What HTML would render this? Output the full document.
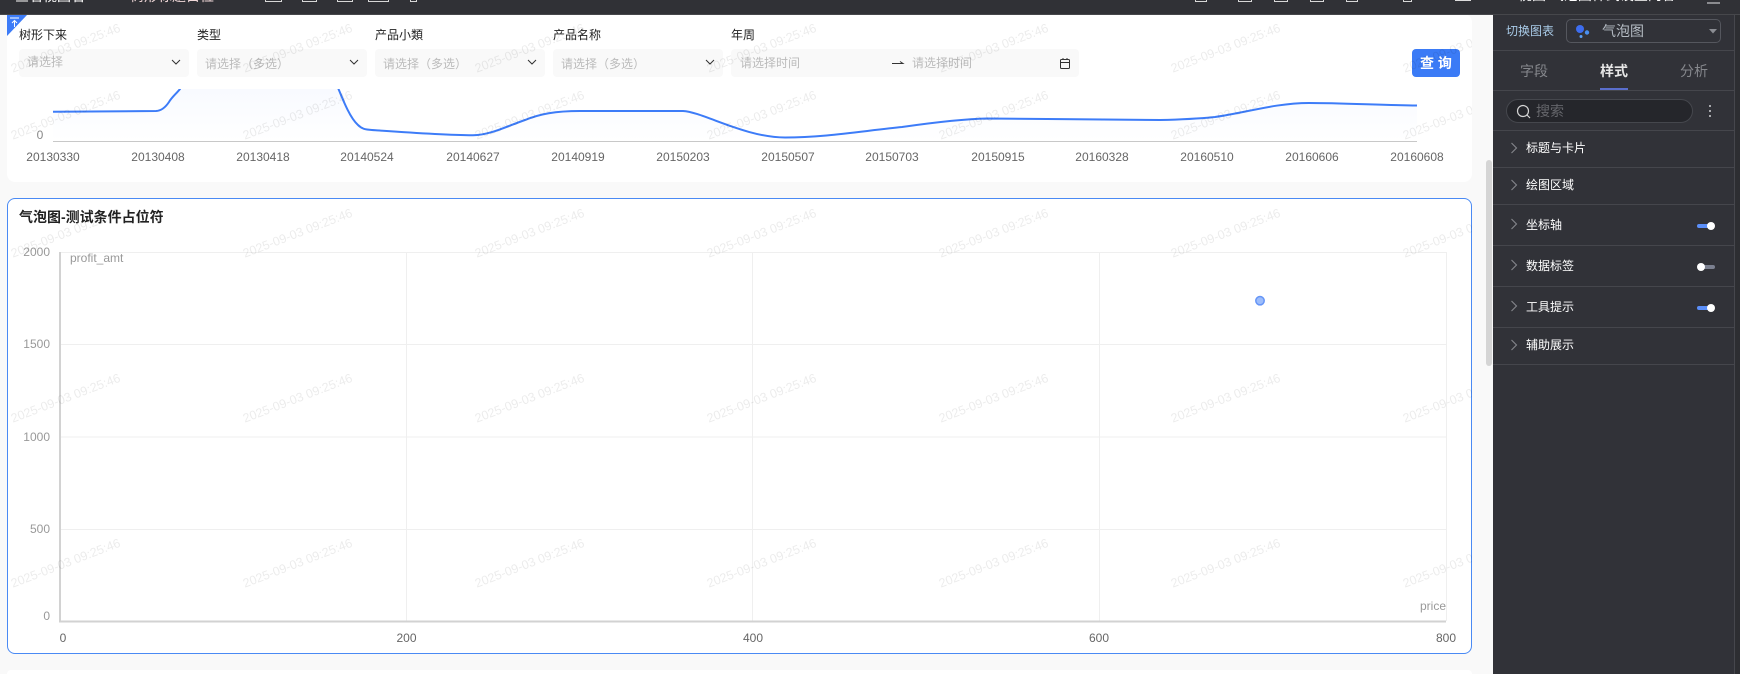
<!DOCTYPE html>
<html lang="zh"><head><meta charset="utf-8"><title>气泡图</title>
<style>
*{box-sizing:border-box}
html,body{margin:0;padding:0;width:1740px;height:674px;overflow:hidden;background:#f9f9f9;font-family:"Liberation Sans","Noto Sans CJK SC",sans-serif;font-size:12px}
.a{position:absolute;white-space:nowrap}
.top{left:0;top:0;width:1740px;height:15px;background:#303136;border-bottom:1px solid #46474b;overflow:hidden}
.u{position:absolute;top:-6px;height:8px;border:1px solid #d8d8d8}
.card{background:#fff;border-radius:8px}
.lab{top:27px;line-height:16px;color:#222}
.sel{top:49px;height:28px;background:#f9f9f9;border-radius:4px}
.ph{top:56px;line-height:16px;color:#bbb}
.side{left:1493px;top:15px;width:242px;height:659px;background:#313238;border-right:1px solid #46474d}
.hl{left:1493px;width:241px;height:1px;background:#45464c}
.it{left:1526px;line-height:16px;color:#fff}
.ta{top:62px;line-height:18px;font-size:14px;color:#85878c;transform:translateX(-50%)}
svg{position:absolute;left:0;top:0}
</style></head><body>
<div class="a" style="left:1472px;top:14px;width:21px;height:660px;background:#f9f9f9"></div>
<div class="a card" style="left:7px;top:14px;width:1465px;height:168px"></div>
<div class="a card" style="left:7px;top:198px;width:1465px;height:456px;border:1px solid #4a8af4"></div>
<div class="a" style="left:7px;top:670px;width:1465px;height:4px;background:#fff;border-radius:8px 8px 0 0"></div>
<div class="a" style="left:1486px;top:160px;width:6px;height:206px;background:#d5d5d5;border-radius:3px"></div>

<div class="a lab" style="left:19px">树形下来</div>
<div class="a lab" style="left:197px">类型</div>
<div class="a lab" style="left:375px">产品小類</div>
<div class="a lab" style="left:553px">产品名称</div>
<div class="a lab" style="left:731px">年周</div>
<div class="a sel" style="left:19px;width:170px"></div>
<div class="a sel" style="left:197px;width:170px"></div>
<div class="a sel" style="left:375px;width:170px"></div>
<div class="a sel" style="left:553px;width:170px"></div>
<div class="a sel" style="left:731px;width:348px"></div>
<div class="a ph" style="left:27px;top:54px">请选择</div>
<div class="a ph" style="left:205px">请选择（多选）</div>
<div class="a ph" style="left:383px">请选择（多选）</div>
<div class="a ph" style="left:561px">请选择（多选）</div>
<div class="a ph" style="left:740px;top:55px">请选择时间</div>
<div class="a ph" style="left:912px;top:55px">请选择时间</div>
<div class="a" style="left:1412px;top:49px;width:48px;height:28px;background:#3b7bf6;border-radius:4px;color:#fff;font-size:14px;font-weight:bold;line-height:28px;text-align:center">查 询</div>

<svg width="1740" height="674" viewBox="0 0 1740 674">
<defs><clipPath id="c1"><rect x="0" y="89" width="1472" height="60"/></clipPath><clipPath id="wm"><rect x="7" y="14" width="1465" height="640"/></clipPath>
<linearGradient id="gr" x1="0" y1="89" x2="0" y2="141" gradientUnits="userSpaceOnUse"><stop offset="0" stop-color="#3370ff" stop-opacity=".035"/><stop offset="1" stop-color="#3370ff" stop-opacity="0"/></linearGradient></defs>
<g fill="none" stroke="#333" stroke-width="1">
<path d="M172 60l4 4 4-4M350 60l4 4 4-4M528 60l4 4 4-4M706 60l4 4 4-4"/>
<path d="M892 63.500h11l-3-2"/>
<rect x="1060.500" y="59.500" width="9" height="9" rx="1"/><path d="M1060 62.500h10M1063 58v2M1067 58v2"/>
</g>
<g clip-path="url(#c1)">
<path fill="url(#gr)" d="M53 111.700L156 111C161 110.800 165 108 169 102C172 97 176 94 180 89C200 40 320 40 338.500 89C343 100 350 118 358 125C362 129 365 129.500 372 130C400 132 440 135 473 135.300C490 135 505 127 525 120C540 114 555 111 580 111L683 111C703 112 745 137.500 785 137.500C825 137.500 862 131 902 127C930 123 960 119 987 118.500C1040 118.500 1115 120 1160 120C1185 119.500 1200 118.500 1215 117C1245 113 1275 103 1309 103C1340 103 1380 105 1417 105.500V141H53Z"/>
<path fill="none" stroke="#3d7cf8" stroke-width="2" d="M53 111.700L156 111C161 110.800 165 108 169 102C172 97 176 94 180 89C200 40 320 40 338.500 89C343 100 350 118 358 125C362 129 365 129.500 372 130C400 132 440 135 473 135.300C490 135 505 127 525 120C540 114 555 111 580 111L683 111C703 112 745 137.500 785 137.500C825 137.500 862 131 902 127C930 123 960 119 987 118.500C1040 118.500 1115 120 1160 120C1185 119.500 1200 118.500 1215 117C1245 113 1275 103 1309 103C1340 103 1380 105 1417 105.500"/>
</g>
<path d="M53 141.500H1417" stroke="#c8c8c8" stroke-width="1"/>
<g font-family="'Liberation Sans',sans-serif" font-size="12" fill="#666" text-anchor="middle">
<text x="40" y="139" fill="#888">0</text>
<text x="53" y="161">20130330</text><text x="158" y="161">20130408</text><text x="263" y="161">20130418</text><text x="367" y="161">20140524</text><text x="473" y="161">20140627</text><text x="578" y="161">20140919</text><text x="683" y="161">20150203</text><text x="788" y="161">20150507</text><text x="892" y="161">20150703</text><text x="998" y="161">20150915</text><text x="1102" y="161">20160328</text><text x="1207" y="161">20160510</text><text x="1312" y="161">20160606</text><text x="1417" y="161">20160608</text>
</g>

<g stroke="#efefef" stroke-width="1" fill="none">
<path d="M60 252.500H1446M60 344.500H1446M60 437H1446M60 529.500H1446M406.500 252V621M752.500 252V621M1099.500 252V621M1446.500 252V621"/>
</g>
<path d="M60 252V621.500H1446" fill="none" stroke="#d2d2d2" stroke-width="2"/>
<circle cx="1260" cy="300.700" r="4.200" fill="#9dbdfb" stroke="#6595f7" stroke-width="1.500"/>
<g font-family="'Liberation Sans',sans-serif" font-size="12" fill="#999">
<g text-anchor="end"><text x="50" y="256">2000</text><text x="50" y="348">1500</text><text x="50" y="441">1000</text><text x="50" y="533">500</text><text x="50" y="620">0</text><text x="1446" y="610">price</text></g>
<text x="70" y="262">profit_amt</text>
</g>
<g font-family="'Liberation Sans',sans-serif" font-size="12" fill="#666" text-anchor="middle">
<text x="63" y="642">0</text><text x="406.500" y="642">200</text><text x="753" y="642">400</text><text x="1099" y="642">600</text><text x="1446" y="642">800</text>
</g>
<text x="19" y="222" font-size="14" font-weight="bold" fill="#222" font-family="'Liberation Sans','Noto Sans CJK SC',sans-serif">气泡图-测试条件占位符</text>

<g clip-path="url(#wm)" font-family="'Liberation Sans',sans-serif" font-size="12.500" fill="#000" fill-opacity=".08" text-anchor="middle">
<text transform="translate(67 52) rotate(-21)">2025-09-03 09:25:46</text><text transform="translate(299 52) rotate(-21)">2025-09-03 09:25:46</text><text transform="translate(531 52) rotate(-21)">2025-09-03 09:25:46</text><text transform="translate(763 52) rotate(-21)">2025-09-03 09:25:46</text><text transform="translate(995 52) rotate(-21)">2025-09-03 09:25:46</text><text transform="translate(1227 52) rotate(-21)">2025-09-03 09:25:46</text><text transform="translate(1459 52) rotate(-21)">2025-09-03 09:25:46</text>
<text transform="translate(67 119) rotate(-21)">2025-09-03 09:25:46</text><text transform="translate(299 119) rotate(-21)">2025-09-03 09:25:46</text><text transform="translate(531 119) rotate(-21)">2025-09-03 09:25:46</text><text transform="translate(763 119) rotate(-21)">2025-09-03 09:25:46</text><text transform="translate(995 119) rotate(-21)">2025-09-03 09:25:46</text><text transform="translate(1227 119) rotate(-21)">2025-09-03 09:25:46</text><text transform="translate(1459 119) rotate(-21)">2025-09-03 09:25:46</text>
<text transform="translate(67 237) rotate(-21)">2025-09-03 09:25:46</text><text transform="translate(299 237) rotate(-21)">2025-09-03 09:25:46</text><text transform="translate(531 237) rotate(-21)">2025-09-03 09:25:46</text><text transform="translate(763 237) rotate(-21)">2025-09-03 09:25:46</text><text transform="translate(995 237) rotate(-21)">2025-09-03 09:25:46</text><text transform="translate(1227 237) rotate(-21)">2025-09-03 09:25:46</text><text transform="translate(1459 237) rotate(-21)">2025-09-03 09:25:46</text>
<text transform="translate(67 402) rotate(-21)">2025-09-03 09:25:46</text><text transform="translate(299 402) rotate(-21)">2025-09-03 09:25:46</text><text transform="translate(531 402) rotate(-21)">2025-09-03 09:25:46</text><text transform="translate(763 402) rotate(-21)">2025-09-03 09:25:46</text><text transform="translate(995 402) rotate(-21)">2025-09-03 09:25:46</text><text transform="translate(1227 402) rotate(-21)">2025-09-03 09:25:46</text><text transform="translate(1459 402) rotate(-21)">2025-09-03 09:25:46</text>
<text transform="translate(67 567) rotate(-21)">2025-09-03 09:25:46</text><text transform="translate(299 567) rotate(-21)">2025-09-03 09:25:46</text><text transform="translate(531 567) rotate(-21)">2025-09-03 09:25:46</text><text transform="translate(763 567) rotate(-21)">2025-09-03 09:25:46</text><text transform="translate(995 567) rotate(-21)">2025-09-03 09:25:46</text><text transform="translate(1227 567) rotate(-21)">2025-09-03 09:25:46</text><text transform="translate(1459 567) rotate(-21)">2025-09-03 09:25:46</text>
</g>
<path d="M7 36V15H27Z" fill="#3d7cf8"/>
<path d="M10 18h9M14.500 27v-6M12 23l2.500-2.500 2.500 2.500" stroke="#fff" fill="none" stroke-width="1"/>
</svg>

<div class="a" style="left:1735px;top:0;width:5px;height:674px;background:#2d2e32"></div>
<div class="a side"></div>
<div class="a top">
<div class="a" style="left:15px;top:-11px;font-size:14px;line-height:14px;color:#fff">查看视图名</div>
<div class="a" style="left:130px;top:-11px;font-size:14px;line-height:14px;color:#f0d8d8">树形标题占位</div>
<div class="u" style="left:265px;width:17px"></div><div class="u" style="left:302px;width:15px"></div><div class="u" style="left:337px;width:16px"></div><div class="u" style="left:368px;width:21px"></div><div class="u" style="left:410px;width:7px"></div>
<div class="u" style="left:1195px;width:12px"></div><div class="u" style="left:1238px;width:14px"></div><div class="u" style="left:1274px;width:14px"></div><div class="u" style="left:1310px;width:14px"></div><div class="u" style="left:1346px;width:12px"></div><div class="u" style="left:1403px;width:9px"></div>
<div class="a" style="left:1455px;top:0;width:16px;height:1px;background:#ddd"></div>
<div class="a" style="left:1518px;top:-12px;font-size:14px;line-height:14px;color:#fff">视图 气泡图样式设置内容</div>
<div class="a" style="left:1707px;top:2px;width:13px;height:2px;background:#8a8b8f"></div>
</div>

<div class="a" style="left:1506px;top:23px;line-height:16px;color:#a9cbe8">切换图表</div>
<div class="a" style="left:1566px;top:19px;width:155px;height:24px;border:1px solid #55575e;border-radius:5px"></div>
<div class="a" style="left:1506px;top:99px;width:187px;height:24px;background:#25262b;border:1px solid #45474d;border-radius:12px"></div>
<svg width="1740" height="674" viewBox="0 0 1740 674">
<circle cx="1580" cy="29" r="4" fill="#3d6df0"/><circle cx="1587" cy="32.500" r="2.200" fill="#4a90f0"/><circle cx="1581" cy="36.500" r="1.500" fill="#5aa0f5"/>
<path d="M1709 29h8l-4 4.500z" fill="#8b8d93"/>
<circle cx="1523" cy="111" r="5.500" fill="none" stroke="#d5d5d5" stroke-width="1.200"/><path d="M1527 115l3 3" stroke="#d5d5d5" stroke-width="1.200"/>
<g fill="#a8a9ad"><rect x="1709" y="105" width="2" height="2"/><rect x="1709" y="110" width="2" height="2"/><rect x="1709" y="115" width="2" height="2"/></g>
<g fill="none" stroke="#85878c" stroke-width="1.100"><path d="M1511.500 143l5 5-5 5M1511.500 180l5 5-5 5M1511.500 219l5 5-5 5M1511.500 260l5 5-5 5M1511.500 301l5 5-5 5M1511.500 340l5 5-5 5"/></g>
<g><rect x="1697" y="224" width="16" height="4" rx="2" fill="#5b8ff9"/><circle cx="1711" cy="226" r="4" fill="#fff"/>
<rect x="1699" y="265" width="16" height="4" rx="2" fill="#7b8090"/><circle cx="1701" cy="267" r="4" fill="#fff"/>
<rect x="1697" y="306" width="16" height="4" rx="2" fill="#5b8ff9"/><circle cx="1711" cy="308" r="4" fill="#fff"/></g>
</svg>
<div class="a" style="left:1602px;top:22px;font-size:14px;line-height:18px;color:#b5bcc4">气泡图</div>
<div class="a hl" style="top:50px"></div>
<div class="a ta" style="left:1534px">字段</div>
<div class="a ta" style="left:1614px;color:#e6e6e6;font-weight:bold">样式</div>
<div class="a ta" style="left:1694px">分析</div>
<div class="a" style="left:1600px;top:88px;width:28px;height:2px;background:#5a6ecc"></div>
<div class="a hl" style="top:90px"></div>
<div class="a" style="left:1536px;top:102px;font-size:14px;line-height:18px;color:#65666b">搜索</div>
<div class="a hl" style="top:130px"></div>
<div class="a it" style="top:140px">标题与卡片</div>
<div class="a hl" style="top:167px"></div>
<div class="a it" style="top:177px">绘图区域</div>
<div class="a hl" style="top:204px"></div>
<div class="a it" style="top:217px">坐标轴</div>
<div class="a hl" style="top:245px"></div>
<div class="a it" style="top:258px">数据标签</div>
<div class="a hl" style="top:286px"></div>
<div class="a it" style="top:299px">工具提示</div>
<div class="a hl" style="top:327px"></div>
<div class="a it" style="top:337px">辅助展示</div>
<div class="a hl" style="top:364px"></div>
</body></html>
